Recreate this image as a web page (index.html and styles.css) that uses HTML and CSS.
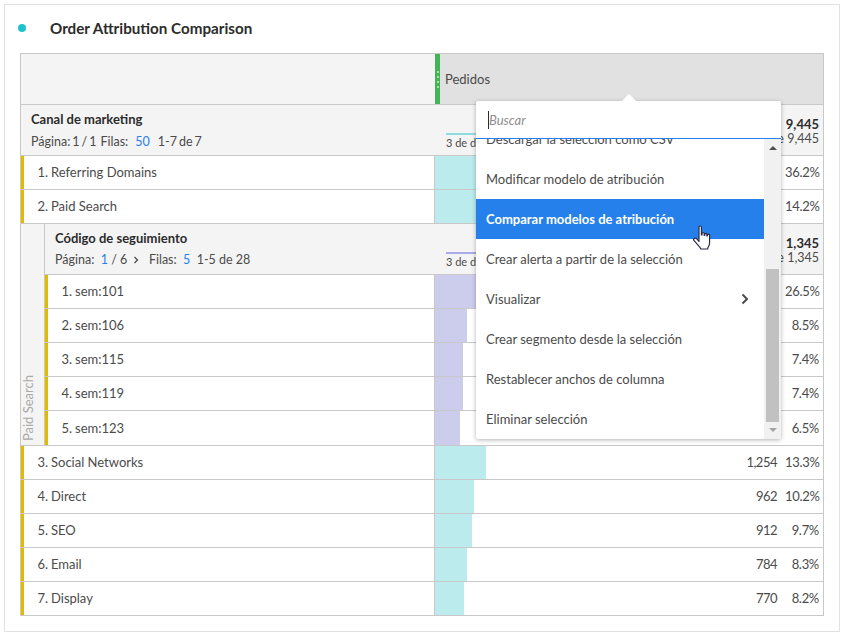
FILE: index.html
```html
<!DOCTYPE html>
<html lang="en">
<head>
<meta charset="UTF-8">
<title>Order Attribution Comparison</title>
<link rel="stylesheet" href="styles.css">
</head>
<body>

<div class="card">
  <div class="cardTitle">
    <span class="dot"></span>
    <h1>Order Attribution Comparison</h1>
  </div>

  <div class="table">
    <div class="topRow">
      <div class="topLeft"></div>
      <div class="topRight">
        <span class="handle"><i></i><i></i><i></i><i></i></span>
        <span>Pedidos</span>
      </div>
    </div>

    <div class="summary">
      <div class="summaryLeft">
        <strong>Canal de marketing</strong>
        <p class="tight">Página: 1 / 1 &nbsp;Filas: &nbsp;<a>50</a> &nbsp;1-7 de 7</p>
      </div>
      <div class="summaryRight">
        <div class="dateTag tealTag">3 de dic</div>
        <div class="totals"><b>9,445</b><small>de 9,445</small></div>
      </div>
    </div>

    <div class="row">
      <div class="rowName"><span class="rank">1.</span>Referring Domains</div>
      <div class="rowValue">
        <span class="bar teal" style="width:139px"></span>
        <span class="num"></span><span class="pct">36.2%</span>
      </div>
    </div>
    <div class="row">
      <div class="rowName"><span class="rank">2.</span>Paid Search</div>
      <div class="rowValue">
        <span class="bar teal" style="width:55px"></span>
        <span class="num"></span><span class="pct">14.2%</span>
      </div>
    </div>

    <div class="breakdown">
      <div class="sideLabel"><span>Paid Search</span></div>
      <div class="breakdownBody">
        <div class="summary subSummary">
          <div class="summaryLeft">
            <strong>Código de seguimiento</strong>
            <p>Página: &nbsp;<a>1</a> / 6 <svg class="pageNext" width="6" height="8" viewBox="0 0 6 8"><path d="M1.5 1 L4.5 4 L1.5 7" fill="none" stroke="#4b4b4b" stroke-width="1.3"/></svg> &nbsp;Filas: &nbsp;<a>5</a> &nbsp;1-5 de 28</p>
          </div>
          <div class="summaryRight">
            <div class="dateTag purpleTag">3 de dic</div>
            <div class="totals"><b>1,345</b><small>de 1,345</small></div>
          </div>
        </div>
        <div class="row">
          <div class="rowName"><span class="rank">1.</span>sem:101</div>
          <div class="rowValue">
            <span class="bar purple" style="width:102px"></span>
            <span class="num"></span><span class="pct">26.5%</span>
          </div>
        </div>
        <div class="row">
          <div class="rowName"><span class="rank">2.</span>sem:106</div>
          <div class="rowValue">
            <span class="bar purple" style="width:32px"></span>
            <span class="num"></span><span class="pct">8.5%</span>
          </div>
        </div>
        <div class="row">
          <div class="rowName"><span class="rank">3.</span>sem:115</div>
          <div class="rowValue">
            <span class="bar purple" style="width:28px"></span>
            <span class="num"></span><span class="pct">7.4%</span>
          </div>
        </div>
        <div class="row">
          <div class="rowName"><span class="rank">4.</span>sem:119</div>
          <div class="rowValue">
            <span class="bar purple" style="width:28px"></span>
            <span class="num"></span><span class="pct">7.4%</span>
          </div>
        </div>
        <div class="row">
          <div class="rowName"><span class="rank">5.</span>sem:123</div>
          <div class="rowValue">
            <span class="bar purple" style="width:25px"></span>
            <span class="num"></span><span class="pct">6.5%</span>
          </div>
        </div>
      </div>
    </div>

    <div class="row">
      <div class="rowName"><span class="rank">3.</span>Social Networks</div>
      <div class="rowValue">
        <span class="bar teal" style="width:51px"></span>
        <span class="num">1,254</span><span class="pct">13.3%</span>
      </div>
    </div>
    <div class="row">
      <div class="rowName"><span class="rank">4.</span>Direct</div>
      <div class="rowValue">
        <span class="bar teal" style="width:39px"></span>
        <span class="num">962</span><span class="pct">10.2%</span>
      </div>
    </div>
    <div class="row">
      <div class="rowName"><span class="rank">5.</span>SEO</div>
      <div class="rowValue">
        <span class="bar teal" style="width:37px"></span>
        <span class="num">912</span><span class="pct">9.7%</span>
      </div>
    </div>
    <div class="row">
      <div class="rowName"><span class="rank">6.</span>Email</div>
      <div class="rowValue">
        <span class="bar teal" style="width:32px"></span>
        <span class="num">784</span><span class="pct">8.3%</span>
      </div>
    </div>
    <div class="row">
      <div class="rowName"><span class="rank">7.</span>Display</div>
      <div class="rowValue">
        <span class="bar teal" style="width:29px"></span>
        <span class="num">770</span><span class="pct">8.2%</span>
      </div>
    </div>
  </div>

  <div class="menu">
    <span class="menuArrow"></span>
    <div class="menuSearch"><span class="caret"></span><em>Buscar</em></div>
    <div class="menuBody">
      <ul class="menuList">
        <li>Descargar la selección como CSV</li>
        <li>Modificar modelo de atribución</li>
        <li class="active">Comparar modelos de atribución</li>
        <li>Crear alerta a partir de la selección</li>
        <li class="hasSub">Visualizar
          <svg width="10" height="12" viewBox="0 0 10 12"><path d="M2.5 1.5 L7 6 L2.5 10.5" fill="none" stroke="#4b4b4b" stroke-width="2"/></svg>
        </li>
        <li>Crear segmento desde la selección</li>
        <li>Restablecer anchos de columna</li>
        <li>Eliminar selección</li>
      </ul>
      <div class="scrollTrack">
        <span class="arrowUp"></span>
        <span class="thumb"></span>
        <span class="arrowDown"></span>
      </div>
    </div>
  </div>

  <svg class="cursor" width="20" height="26" viewBox="0 0 20 26">
    <path d="M6 2.200c0-1.600 2.400-1.600 2.400 0V10h.6V8.600c0-1.500 2.200-1.500 2.200 0V10.400h.5V9.400c0-1.400 2.200-1.400 2.200 0v1.600h.5v-.8c0-1.400 2.200-1.400 2.200 0v7.300c0 2.200-.6 3.400-1.300 4.400-.5.800-.6 1.300-.6 2.100H7.800c-.3-1.300-1.100-2.100-2.100-3.200L.9 15.400c-1.100-1.700.9-3 2.600-1.800L6 16.300z" fill="#fff" stroke="#2b2b45" stroke-width="1.200" stroke-linejoin="round"/>
  </svg>
</div>

</body>
</html>
```

FILE: styles.css
```css
* {
  box-sizing: border-box;
}
body {
  margin: 0;
  font-family: Lato, "Open Sans", sans-serif;
  font-size: 13px;
  color: #4b4b4b;
  background-color: #fff;
}
.card {
  position: relative;
  width: 836px;
  height: 628px;
  margin: 4px 0 0 4px;
  padding: 0 15px;
  border: 1px solid #e1e1e1;
}
.cardTitle {
  display: flex;
  align-items: center;
  height: 46px;
  margin-bottom: 2px;
}
.dot {
  width: 8px;
  height: 8px;
  margin-right: 24px;
  margin-left: -2px;
  border-radius: 50%;
  background-color: #1fc2cc;
}
h1 {
  margin: 0;
  font-size: 15.200px;
  font-weight: 700;
  color: #2c2c2c;
}
.table {
  border: 1px solid #c8c8c8;
  border-bottom-width: 0;
}
.topRow {
  display: flex;
  height: 51px;
  border-bottom: 1px solid #c8c8c8;
}
.topLeft {
  width: 414px;
  background-color: #f4f4f4;
}
.topRight {
  flex: 1;
  display: flex;
  align-items: center;
  gap: 5px;
  background-color: #e1e1e1;
}
.handle {
  display: flex;
  flex-direction: column;
  align-items: center;
  justify-content: center;
  gap: 3px;
  width: 5px;
  height: 100%;
  background-color: #44b556;
}
.handle i {
  width: 2px;
  height: 2px;
  border-radius: 50%;
  background-color: #c9eccf;
}
.summary {
  display: flex;
  height: 51px;
  border-bottom: 1px solid #c8c8c8;
  background-color: #f4f4f4;
}
.summaryLeft {
  width: 414px;
  padding: 6px 0 0 10px;
}
.summaryLeft strong {
  display: block;
  font-size: 13px;
  line-height: 17px;
  color: #2c2c2c;
}
.summaryLeft p {
  margin: 5px 0 0;
  font-size: 12.500px;
  line-height: 16px;
}
.summaryLeft p.tight {
  margin-top: 6px;
  word-spacing: -1.200px;
}
.summaryLeft p.tight a {
  margin: 0 4px 0 3px;
}
.summaryLeft a {
  color: #2680eb;
}
.pageNext {
  margin: 0 3px;
}
.summaryRight {
  flex: 1;
  display: flex;
  justify-content: space-between;
  padding: 12px 4px 0 11px;
}
.dateTag {
  height: 26px;
  margin-top: 16px;
  padding-top: 1px;
  font-size: 11px;
  line-height: 14px;
  border-top: 2px solid;
}
.tealTag {
  border-color: #8fdcdf;
}
.purpleTag {
  border-color: #a9a9e8;
}
.totals {
  text-align: right;
  line-height: 14px;
}
.totals b {
  display: block;
  color: #2c2c2c;
}
.totals small {
  font-size: 12.500px;
}
.row {
  display: flex;
  height: 34px;
  border-bottom: 1px solid #c8c8c8;
  background-color: #fff;
}
.rowName {
  flex: 1;
  display: flex;
  align-items: center;
  padding-bottom: 1px;
  border-left: 3px solid #e0bb00;
  border-right: 1px solid #c8c8c8;
}
.rank {
  width: 27px;
  padding-right: 3px;
  text-align: right;
}
.rowValue {
  position: relative;
  display: flex;
  align-items: center;
  justify-content: flex-end;
  width: 388px;
  padding-right: 4px;
  padding-bottom: 1px;
}
.bar {
  position: absolute;
  top: 0;
  bottom: 0;
  left: 0;
}
.teal {
  background-color: #bbebed;
}
.purple {
  background-color: #cccced;
}
.num {
  position: relative;
  margin-right: 8px;
  letter-spacing: -0.500px;
}
.pct {
  position: relative;
  width: 34px;
  text-align: right;
  letter-spacing: -0.300px;
}
.breakdown {
  display: flex;
  border-bottom: 1px solid #c8c8c8;
}
.sideLabel {
  display: flex;
  align-items: flex-end;
  justify-content: flex-start;
  width: 24px;
  padding-bottom: 4px;
  border-right: 1px solid #c8c8c8;
  background-color: #f4f4f4;
}
.sideLabel span {
  margin-left: -1px;
  writing-mode: vertical-rl;
  transform: rotate(180deg);
  font-size: 13px;
  color: #aaa;
}
.breakdownBody {
  flex: 1;
}
.breakdownBody .row:last-child {
  border-bottom: 0;
}
.subSummary .summaryLeft {
  width: 390px;
}
.menu {
  position: absolute;
  top: 96px;
  left: 471px;
  width: 305px;
  height: 338px;
  border-radius: 2px;
  background-color: #fff;
  box-shadow: 0 1px 4px rgba(0, 0, 0, 0.3);
}
.menuArrow {
  position: absolute;
  top: -7px;
  left: 146px;
  border-right: 7px solid transparent;
  border-bottom: 7px solid #fff;
  border-left: 7px solid transparent;
}
.menuSearch {
  display: flex;
  align-items: center;
  height: 38px;
  padding-left: 12px;
  border-bottom: 1px solid #2680eb;
}
.caret {
  width: 1px;
  height: 18px;
  background-color: #2c2c2c;
}
.menuSearch em {
  color: #8e8e8e;
}
.menuBody {
  display: flex;
  height: 300px;
  overflow: hidden;
}
.menuList {
  flex: 1;
  margin: -20px 0 0;
  padding: 0;
  overflow: hidden;
  list-style: none;
}
.menuList li {
  display: flex;
  align-items: center;
  justify-content: space-between;
  height: 40px;
  padding: 0 14px 0 10px;
}
.menuList li.active {
  font-weight: 700;
  color: #fff;
  background-color: #2680eb;
}
.scrollTrack {
  position: relative;
  width: 17px;
  background-color: #f1f1f1;
}
.arrowUp,
.arrowDown {
  position: absolute;
  left: 5px;
  border-right: 4px solid transparent;
  border-left: 4px solid transparent;
}
.arrowUp {
  top: 7px;
  border-bottom: 4px solid #505050;
}
.arrowDown {
  bottom: 7px;
  border-top: 4px solid #a3a3a3;
}
.thumb {
  position: absolute;
  top: 130px;
  left: 2px;
  width: 13px;
  height: 153px;
  background-color: #c1c1c1;
}
.cursor {
  position: absolute;
  top: 220px;
  left: 688px;
}
```
